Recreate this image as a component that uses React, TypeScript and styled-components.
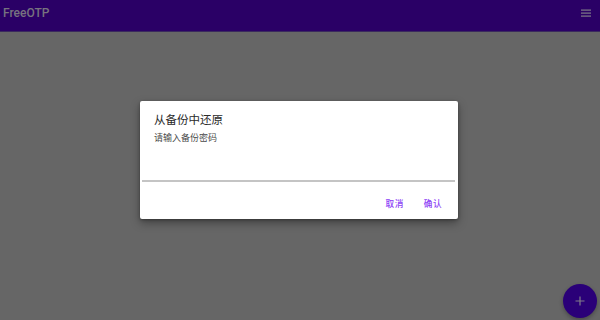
import React from "react";
import styled, { createGlobalStyle } from "styled-components";

const GlobalStyle = createGlobalStyle`
  html, body {
    margin: 0;
    padding: 0;
    width: 600px;
    height: 320px;
    overflow: hidden;
    background: #666666;
  }
  * {
    box-sizing: border-box;
  }
`;

const Screen = styled.div`
  position: relative;
  width: 600px;
  height: 320px;
  display: flex;
  flex-direction: column;
  background: #666666;
  font-family: Roboto, "Noto Sans CJK SC", sans-serif;
  overflow: hidden;
`;

const AppBar = styled.header`
  height: 32px;
  flex: none;
  display: flex;
  align-items: center;
  justify-content: space-between;
  padding: 0 8px 0 3px;
  background: #2a0066;
  border-bottom: 1px solid #3a2a5e;
`;

const AppTitle = styled.span`
  font-family: Roboto, sans-serif;
  font-weight: 500;
  font-size: 12px;
  color: #77737f;
  margin-top: -6px;
`;

const MenuIcon = styled.svg`
  width: 12px;
  height: 12px;
  margin-top: -4px;
`;

const Content = styled.main`
  flex: 1;
`;

const Scrim = styled.div`
  position: absolute;
  inset: 0;
  display: flex;
  align-items: center;
  justify-content: center;
  padding-right: 2px;
`;

const Dialog = styled.div`
  width: 318px;
  height: 118px;
  display: flex;
  flex-direction: column;
  padding: 10px 14px 0;
  background: #ffffff;
  border-radius: 2px;
  box-shadow: 0 4px 10px rgba(0, 0, 0, 0.35), 0 1px 3px rgba(0, 0, 0, 0.3);
  font-family: "Noto Sans CJK SC", sans-serif;
`;

const DialogTitle = styled.div`
  font-size: 11.5px;
  line-height: 16px;
  color: #2a2a2a;
`;

const DialogMessage = styled.div`
  margin-top: 4px;
  font-size: 9px;
  line-height: 14px;
  color: #4a4a4a;
`;

const PasswordInput = styled.input`
  height: 37px;
  margin: 0 -11px 0 -12px;
  padding: 0;
  border: none;
  border-bottom: 2px solid #c4c4c4;
  outline: none;
  background: transparent;
`;

const Actions = styled.div`
  flex: 1;
  display: flex;
  align-items: center;
  justify-content: flex-end;
  gap: 20px;
  padding: 5px 2px 0 0;
`;

const TextButton = styled.button`
  padding: 0;
  border: none;
  background: none;
  font-family: "Noto Sans CJK SC", sans-serif;
  font-weight: 500;
  font-size: 8.6px;
  letter-spacing: 0.5px;
  color: #8c3ff5;
  cursor: pointer;
`;

const Fab = styled.button`
  position: absolute;
  right: 3px;
  bottom: 2px;
  width: 34px;
  height: 34px;
  border-radius: 50%;
  border: none;
  display: flex;
  align-items: center;
  justify-content: center;
  background: #2a0078;
  box-shadow: 0 2px 4px rgba(0, 0, 0, 0.3);
`;

export default function App() {
  return (
    <>
      <GlobalStyle />
      <Screen>
        <AppBar>
          <AppTitle>FreeOTP</AppTitle>
          <MenuIcon viewBox="0 0 12 12">
            <rect x="1" y="1.5" width="10" height="1.2" fill="#7f7b88" />
            <rect x="1" y="4.5" width="10" height="1.2" fill="#7f7b88" />
            <rect x="1" y="7.5" width="10" height="1.2" fill="#7f7b88" />
          </MenuIcon>
        </AppBar>
        <Content />
        <Fab>
          <svg width="10" height="10" viewBox="0 0 10 10">
            <path d="M5 0.5 V9.5 M0.5 5 H9.5" stroke="#7f7b88" strokeWidth="1.2" />
          </svg>
        </Fab>
        <Scrim>
          <Dialog>
            <DialogTitle>从备份中还原</DialogTitle>
            <DialogMessage>请输入备份密码</DialogMessage>
            <PasswordInput type="password" />
            <Actions>
              <TextButton>取消</TextButton>
              <TextButton>确认</TextButton>
            </Actions>
          </Dialog>
        </Scrim>
      </Screen>
    </>
  );
}
